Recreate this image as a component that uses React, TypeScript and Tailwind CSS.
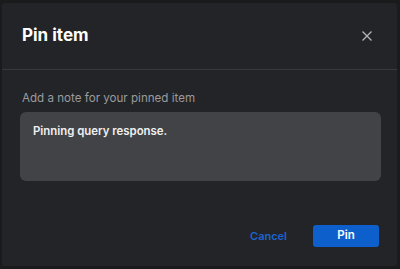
import React from "react";

export default function App() {
  return (
    <div className="w-[400px] h-[269px] bg-[#1a1b1d] pt-[3px] pl-[2px] pr-[3px] pb-[3px]" style={{ fontFamily: "Inter, 'Liberation Sans', sans-serif" }}>
      <div className="h-full flex flex-col bg-[#232427] rounded-[3px]">
        <div className="h-[67px] flex items-center justify-between pl-[20px] pr-[25px] border-b border-[#38393c]">
          <h1 className="text-[17px] font-bold text-white">Pin item</h1>
          <svg width="10" height="10" viewBox="0 0 10 10" className="text-[#b5b6b8]">
            <path d="M0.5 0.5L9.5 9.5M9.5 0.5L0.5 9.5" stroke="currentColor" strokeWidth="1.3" />
          </svg>
        </div>
        <div className="flex flex-col px-[18px] pt-[20px]">
          <label className="text-[11.6px] text-[#9a9b9e] leading-[16px] pl-[2px]">Add a note for your pinned item</label>
          <div className="mt-[6px] h-[69px] bg-[#424346] rounded-[6px] px-[13px] pt-[5px] mr-[-2px]">
            <span className="text-[11.4px] font-semibold text-[#f0f0f0]">Pinning query response.</span>
          </div>
        </div>
        <div className="flex-1" />
        <div className="flex items-center justify-end gap-[26px] pr-[18px] pb-[19px]">
          <button className="text-[11px] font-semibold text-[#1b63cf]">Cancel</button>
          <button className="w-[66px] h-[22px] rounded-[3px] bg-[#0d5fcc] text-[11.5px] font-semibold text-white">Pin</button>
        </div>
      </div>
    </div>
  );
}
